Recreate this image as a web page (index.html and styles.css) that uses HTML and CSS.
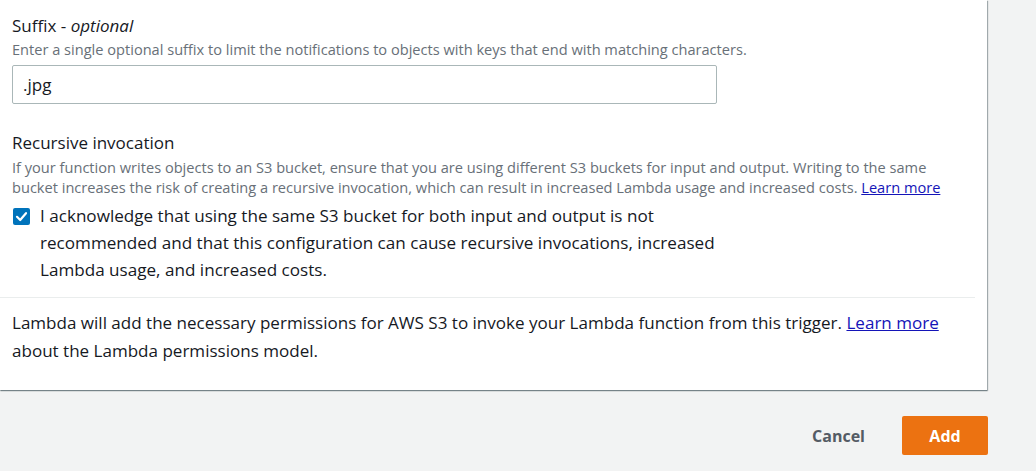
FILE: index.html
```html
<!DOCTYPE html>
<html lang="en">
<head>
<meta charset="utf-8">
<title>Add trigger</title>
<link rel="stylesheet" href="styles.css">
</head>
<body>
<div class="page">
  <div class="card">
    <div class="card-body">
      <div class="field">
        <div class="label">Suffix - <i>optional</i></div>
        <div class="desc">Enter a single optional suffix to limit the notifications to objects with keys that end with matching characters.</div>
        <div class="input">.jpg</div>
      </div>
      <div class="field field-recursive">
        <div class="label">Recursive invocation</div>
        <div class="desc">If your function writes objects to an S3 bucket, ensure that you are using different S3 buckets for input and output. Writing to the same bucket increases the risk of creating a recursive invocation, which can result in increased Lambda usage and increased costs. <a class="link" href="#">Learn more</a></div>
        <div class="check-row">
          <span class="checkbox">
            <svg width="17" height="17" viewBox="0 0 17 17"><rect x="0" y="0" width="17" height="17" rx="2" fill="#0073bb"/><path d="M4 8.8 L7.2 12 L13 5.2" fill="none" stroke="#fff" stroke-width="2.2" stroke-linecap="round" stroke-linejoin="round"/></svg>
          </span>
          <span class="check-label">I acknowledge that using the same S3 bucket for both input and output is not recommended and that this configuration can cause recursive invocations, increased Lambda usage, and increased costs.</span>
        </div>
      </div>
    </div>
    <div class="divider"></div>
    <div class="card-note">Lambda will add the necessary permissions for AWS S3 to invoke your Lambda function from this trigger. <a class="link" href="#">Learn more</a> about the Lambda permissions model.</div>
  </div>
  <div class="actions">
    <button class="btn btn-cancel">Cancel</button>
    <button class="btn btn-add">Add</button>
  </div>
</div>
</body>
</html>
```
FILE: styles.css
```css
html, body {
  margin: 0;
  padding: 0;
}
body {
  background: #f2f3f3;
  font-family: "Open Sans", "Noto Sans", sans-serif;
  color: #16191f;
  width: 1036px;
  height: 471px;
  overflow: hidden;
}
.page {
  display: flex;
  flex-direction: column;
}
.card {
  width: 987px;
  background: #fff;
  box-shadow: 1px 1px 1px 0 rgba(0, 28, 36, 0.3), 0 1px 1px 0 rgba(0, 28, 36, 0.3);
  padding-bottom: 25px;
}
.card-body {
  padding: 15px 12px 0 12px;
}
.field {
  display: flex;
  flex-direction: column;
}
.label {
  font-size: 17px;
  line-height: 22px;
}
.label i {
  font-style: italic;
}
.desc {
  font-size: 14.6px;
  line-height: 20px;
  color: #687078;
  margin-top: 2px;
  width: 950px;
}
.input {
  margin-top: 6px;
  width: 705px;
  height: 39px;
  box-sizing: border-box;
  border: 1px solid #aab7b8;
  border-radius: 2px;
  padding: 0 10px;
  display: flex;
  align-items: center;
  font-size: 17px;
  color: #16191f;
}
.field-recursive {
  margin-top: 28px;
}
.field-recursive .desc {
  margin-top: 3px;
}
.link {
  color: #1414b8;
  text-decoration: underline;
  line-height: inherit;
}
.check-row {
  display: flex;
  align-items: flex-start;
  margin-top: 5px;
}
.checkbox {
  width: 17px;
  height: 17px;
  margin-top: 6px;
  margin-left: 1px;
  flex: none;
  display: flex;
}
.check-label {
  margin-left: 10px;
  font-size: 17.1px;
  line-height: 27px;
  width: 680px;
}
.divider {
  margin-top: 14px;
  width: 975px;
  height: 1px;
  background: #eaeded;
}
.card-note {
  padding: 11px 12px 0 12px;
  font-size: 17.05px;
  line-height: 28px;
  width: 940px;
}
.actions {
  display: flex;
  justify-content: flex-end;
  align-items: center;
  width: 988px;
  margin-top: 26px;
  gap: 17px;
}
.btn {
  font-family: "Open Sans", "Noto Sans", sans-serif;
  font-weight: 700;
  font-size: 16px;
  border: none;
  cursor: pointer;
  height: 39px;
  border-radius: 2px;
}
.btn-cancel {
  background: transparent;
  color: #545b64;
  padding: 0 20px 0 22px;
}
.btn-add {
  background: #ec7211;
  color: #fff;
  width: 86px;
  padding: 0;
}
```
